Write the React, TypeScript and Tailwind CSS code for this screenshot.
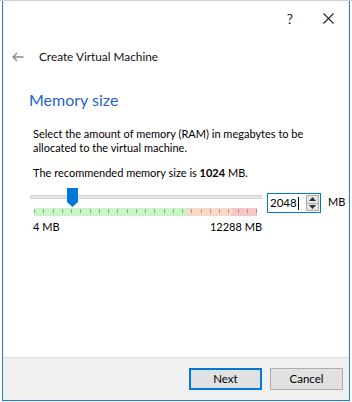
const FONT = { fontFamily: 'Lato, "Noto Sans", sans-serif' };

// tick marks along the memory scale
const TICKS = Array.from({ length: 25 }, (_, i) => i);

function Thumb() {
  return (
    <svg width="11" height="19" viewBox="0 0 11 19" className="absolute top-0 left-[37px]">
      <polygon points="0,0 11,0 11,14 5.5,19 0,14" fill="#0078d7" />
    </svg>
  );
}

function SpinBox() {
  return (
    <div className="mt-[5px] flex h-[20px] w-[54px] items-center border border-[#0078d7] bg-white">
      <span className="pl-[2px] text-[11.5px] leading-none text-black">2048</span>
      <span className="ml-[1px] h-[13px] w-px bg-black" />
      <div className="ml-auto mr-[1px] flex h-[16px] w-[13px] flex-col border border-[#adadad] bg-[#e5e5e5]">
        <div className="flex flex-1 items-center justify-center border-b border-[#adadad]">
          <svg width="7" height="4" viewBox="0 0 7 4">
            <polygon points="0,4 3.5,0 7,4" fill="#333" />
          </svg>
        </div>
        <div className="flex flex-1 items-center justify-center">
          <svg width="7" height="4" viewBox="0 0 7 4">
            <polygon points="0,0 7,0 3.5,4" fill="#333" />
          </svg>
        </div>
      </div>
    </div>
  );
}

export default function App() {
  return (
    <div className="h-[402px] w-[352px] overflow-hidden border-t border-[#cfcfcf] bg-white text-[11px] text-black" style={FONT}>
      <div className="ml-[2px] flex h-[400px] w-[348px] flex-col border-x border-b border-[#1883d7]">
        {/* title bar */}
        <div className="flex h-[34px] items-center justify-end">
          <span className="mr-[30px] text-[14px] text-[#222]">?</span>
          <svg width="11" height="11" viewBox="0 0 11 11" className="mr-[15px]">
            <path d="M0.5 0.5 L10.5 10.5 M10.5 0.5 L0.5 10.5" stroke="#222" strokeWidth="1.1" />
          </svg>
        </div>

        {/* header */}
        <div className="flex h-[44px] items-center">
          <svg width="12" height="10" viewBox="0 0 12 10" className="ml-[9px]">
            <path d="M11.5 5 H1 M5 1 L1 5 L5 9" stroke="#888" strokeWidth="1.4" fill="none" />
          </svg>
          <span className="ml-[15px] text-[11.8px] text-[#111]">Create Virtual Machine</span>
        </div>

        {/* content */}
        <div className="flex-1 pl-[26px]">
          <h1 className="mt-[10px] text-[16px] leading-[22px] text-[#2665c4]">Memory size</h1>
          <div className="pl-[4px]">
            <p className="mt-[16px] leading-[14px]">
              Select the amount of memory (RAM) in megabytes to be
              <br />
              allocated to the virtual machine.
            </p>
            <p className="mt-[11px] leading-[14px]">
              The recommended memory size is <b>1024</b> MB.
            </p>
          </div>

          <div className="mt-[8px] flex items-start pl-[1px]">
            <div className="w-[232px]">
              <div className="relative h-[20px]">
                <div className="absolute left-0 right-0 top-[7px] h-[4px] border border-[#d6d6d6] bg-[#e7e7e7]" />
                <Thumb />
              </div>
              <div className="relative ml-[4px] flex h-[8px] w-[223px]">
                <div className="w-[153px] bg-[#c8f7c5]" />
                <div className="w-[45px] bg-[#fcd9c6]" />
                <div className="flex-1 bg-[#f9c6c6]" />
                {TICKS.map((i) => (
                  <span
                    key={i}
                    className="absolute top-[1px] h-[4px] w-px bg-[#9a9a9a]"
                    style={{ left: `${Math.round((i * 222) / 24)}px` }}
                  />
                ))}
              </div>
              <div className="mt-[4px] flex justify-between pl-[3px] leading-[14px]">
                <span>4 MB</span>
                <span>12288 MB</span>
              </div>
            </div>
            <div className="ml-[5px]">
              <SpinBox />
            </div>
            <span className="ml-[7px] mt-[7px] leading-[14px]">MB</span>
          </div>
        </div>

        {/* footer */}
        <div className="flex h-[43px] items-center justify-end gap-[8px] border-t border-[#dfdfdf] bg-[#f0f0f0] pr-[6px]">
          <button className="h-[22px] w-[73px] border-2 border-[#0078d7] bg-[#e1e1e1] text-[11.5px] leading-none text-black">
            Next
          </button>
          <button className="h-[22px] w-[73px] border border-[#adadad] bg-[#e1e1e1] text-[11.5px] leading-none text-black">
            Cancel
          </button>
        </div>
      </div>
    </div>
  );
}
